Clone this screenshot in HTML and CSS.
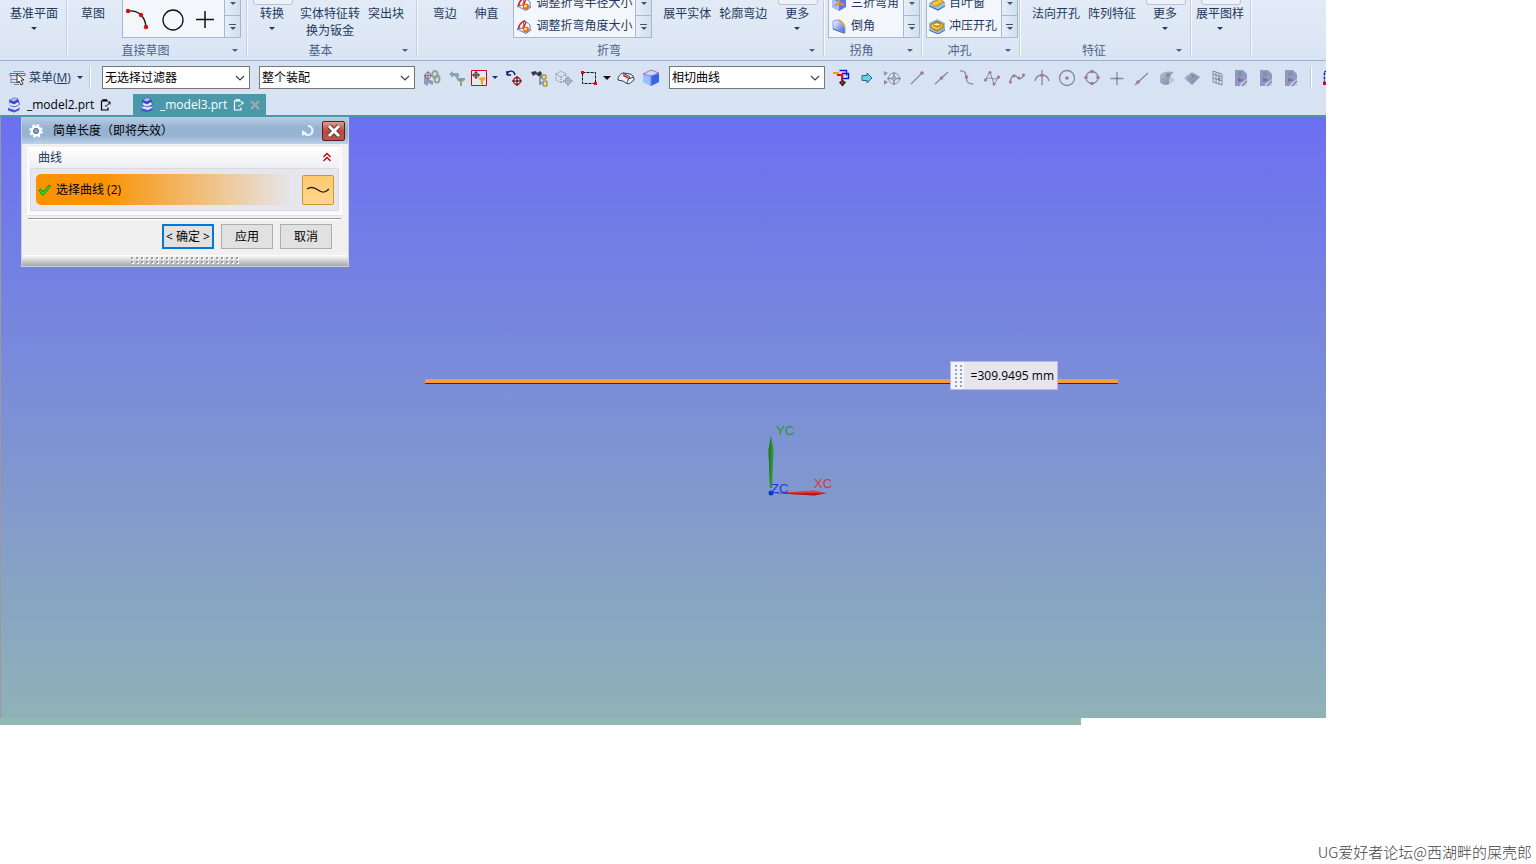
FILE: index.html
```html
<!DOCTYPE html>
<html lang="zh-CN">
<head>
<meta charset="utf-8">
<title>_model3.prt</title>
<link rel="stylesheet" href="styles.css">
</head>
<body>
<svg class="defs" aria-hidden="true">
  <linearGradient id="blue" x1="0" y1="0" x2="1" y2="1"><stop offset="0" stop-color="#fff"/><stop offset="1" stop-color="#2f5fe0"/></linearGradient>
  <linearGradient id="gold" x1="0" y1="0" x2="1" y2="1"><stop offset="0" stop-color="#ffe76a"/><stop offset="1" stop-color="#e09a10"/></linearGradient>
  <linearGradient id="slate" x1="0" y1="0" x2="1" y2="1"><stop offset="0" stop-color="#b4c4d8"/><stop offset="1" stop-color="#6f83a0"/></linearGradient>
  <symbol id="part" viewBox="0 0 14 16"><path d="M1 11l5-2.500 7 2-1 3-5 2-6-2z" fill="#4a58d8"/><path d="M1 11l5-2.500 7 2-5 2.500z" fill="#e2e6fc"/><path d="M2 3l5-2.500 4 1 2 6-6 3-4-2z" fill="#3a44cc"/><path d="M3 3l4-2 4 1-4 2.500z" fill="#b4bcf8"/><path d="M3 8l4 1.500 5-2-1-2.500-4 2.500-4-2z" fill="#e8ecff"/></symbol>
  <symbol id="clip" viewBox="0 0 12 12"><path d="M8 2H1.500v9H8V8.500M3 2V.8h3.500V2" fill="none" stroke="currentColor" stroke-width="1.200"/><path d="M5 7c2 0 3-1 4.500-3.500M8 3h2v2.500" fill="none" stroke="currentColor"/></symbol>
  <symbol id="sheet" viewBox="0 0 16 18"><path d="M2 1h8l4 4v12H2z" fill="#9298c4"/><circle cx="7" cy="5" r="2.300" fill="#6f9d94"/><path d="M5 8.500l6 2.500-6 2z" fill="#8a6a92"/><path d="M14 10l-7 5v2h7z" fill="#c5cee2"/><path d="M14 12l-5 5" stroke="#7d84b4" stroke-width="1.500"/></symbol>
  <symbol id="bend" viewBox="0 0 16 16"><path d="M1 11l5-1 9 2-5 3.500z" fill="#e6eefc" stroke="#5a78b8"/><path d="M7 9l1-7 6 5v5" fill="#fff" stroke="#6b7fae"/><path d="M2.500 11C3 6 5 4 9 3M10 4l-3 7" fill="none" stroke="#d32020" stroke-width="1.500"/><circle cx="10" cy="11.500" r="3" fill="#f0641e"/><circle cx="9.500" cy="11" r="1.500" fill="#ffe36a"/></symbol>
</svg>
<div class="app">
  <nav class="ribbon" aria-label="功能区">
    <section class="group g-datum"><div class="tools"><button class="tool">基准平面<i class="caret"></i></button></div></section>
    <section class="group g-sketch">
      <div class="tools"><button class="tool w48">草图</button>
        <div class="gallery shapes">
          <div class="items"><button aria-label="圆弧"><svg width="26" height="24" viewBox="0 0 26 24"><path d="M3 4C12 3 20 8 21 20" fill="none" stroke="#111" stroke-width="1.300"/><g fill="#d8100c"><circle cx="3" cy="4" r="2.200"/><circle cx="16" cy="8" r="2.200"/><circle cx="21" cy="20" r="2.200"/></g></svg></button><button aria-label="圆"><svg width="24" height="24" viewBox="0 0 24 24"><circle cx="12" cy="13" r="10" fill="none" stroke="#111" stroke-width="1.300"/></svg></button><button aria-label="点"><svg width="20" height="20" viewBox="0 0 20 20"><path d="M10 2v17M1 10.500h18" stroke="#111" stroke-width="1.500"/></svg></button></div>
          <div class="scroll"><button aria-label="下"><i class="caret"></i></button><button class="more" aria-label="展开"><i class="caret"></i></button></div>
        </div></div>
      <div class="caption"><span>直接草图</span><button class="launch" aria-label="直接草图选项"><i class="caret"></i></button></div>
    </section>
    <section class="group g-basic">
      <div class="tools"><button class="tool framed w48">转换<i class="caret"></i></button><button class="tool">实体特征转<br>换为钣金</button><button class="tool">突出块</button></div>
      <div class="caption"><span>基本</span><button class="launch" aria-label="基本选项"><i class="caret"></i></button></div>
    </section>
    <section class="group g-bend">
      <div class="tools"><button class="tool w42">弯边</button><button class="tool w42">伸直</button>
        <div class="gallery list bends">
          <div class="items"><button><svg width="16" height="16"><use href="#bend"/></svg>调整折弯半径大小</button><button><svg width="16" height="16"><use href="#bend"/></svg>调整折弯角度大小</button></div>
          <div class="scroll"><button aria-label="下"><i class="caret"></i></button><button class="more" aria-label="展开"><i class="caret"></i></button></div>
        </div>
        <button class="tool">展平实体</button><button class="tool">轮廓弯边</button><button class="tool framed w52">更多<i class="caret"></i></button></div>
      <div class="caption"><span>折弯</span><button class="launch" aria-label="折弯选项"><i class="caret"></i></button></div>
    </section>
    <section class="group g-corner">
      <div class="tools"><div class="gallery list">
          <div class="items"><button><svg width="16" height="16" viewBox="0 0 16 16"><path d="M1 4l7-3 7 3v8l-7 4-7-4z" fill="#5a78e8"/><path d="M1 4l7 3v9l-7-4z" fill="#a8bcfa"/><path d="M8 7V2M8 8l-4 3M8 8l5 2" stroke="#f08a20" stroke-width="2"/></svg>三折弯角</button><button><svg width="16" height="16" viewBox="0 0 16 16"><path d="M2 3l5-1c4 1 6 4 7 8v5l-3-1-9-3z" fill="url(#blue)" stroke="#7fa0ea"/><path d="M7 2c4 1 6 4 7 8" fill="none" stroke="#e8a030" stroke-width="1.500"/><path d="M2 11l9 3.500 3 .5" stroke="#5a6a90" fill="none"/></svg>倒角</button></div>
          <div class="scroll"><button aria-label="下"><i class="caret"></i></button><button class="more" aria-label="展开"><i class="caret"></i></button></div>
        </div></div>
      <div class="caption"><span>拐角</span><button class="launch" aria-label="拐角选项"><i class="caret"></i></button></div>
    </section>
    <section class="group g-punch">
      <div class="tools"><div class="gallery list">
          <div class="items"><button><svg width="16" height="16" viewBox="0 0 16 16"><path d="M0 8l8-5 8 4v4l-7 5-9-5z" fill="#8fc0f4"/><path d="M2 8l9-4 4 3-9 5z" fill="url(#gold)" stroke="#c88a10"/><path d="M0 11l9 4 7-4" stroke="#2b5fb8" fill="none"/></svg>百叶窗</button><button><svg width="16" height="16" viewBox="0 0 16 16"><path d="M0 5l8-4 8 4v7l-7 4-9-5z" fill="#8fc0f4"/><path d="M2 6l6-3 6 3v4l-6 3-6-3z" fill="url(#gold)" stroke="#a87008"/><ellipse cx="8" cy="6.500" rx="3.500" ry="1.800" fill="#fff3a8" stroke="#8f5c05"/><path d="M0 12l9 4 7-4" stroke="#2b5fb8" fill="none"/></svg>冲压开孔</button></div>
          <div class="scroll"><button aria-label="下"><i class="caret"></i></button><button class="more" aria-label="展开"><i class="caret"></i></button></div>
        </div></div>
      <div class="caption"><span>冲孔</span><button class="launch" aria-label="冲孔选项"><i class="caret"></i></button></div>
    </section>
    <section class="group g-feature">
      <div class="tools"><button class="tool">法向开孔</button><button class="tool">阵列特征</button><button class="tool framed w52">更多<i class="caret"></i></button></div>
      <div class="caption"><span>特征</span><button class="launch" aria-label="特征选项"><i class="caret"></i></button></div>
    </section>
    <section class="group g-flat"><div class="tools"><button class="tool framed">展平图样<i class="caret"></i></button></div></section>
  </nav>

  <div class="bar" role="toolbar">
    <button class="menu"><svg width="17" height="16" viewBox="0 0 17 16"><path d="M2 6v7M2 9.500h7M2 12.500h8M5 14.500h5" stroke="#7d8696" fill="none"/><path d="M4 1.500h11" stroke="#8a93a2"/><path d="M1 3.500h15v2H1z" fill="#e8f0ff" stroke="#3d6be0"/><path d="M8 4v9l2-2 2 4 2-1-2-4h3z" fill="#fff" stroke="#333"/></svg>菜单(<u>M</u>)<i class="caret"></i></button>
    <span class="sep"></span>
    <label class="combo filter"><select aria-label="选择过滤器"><option>无选择过滤器</option></select><svg width="10" height="6" viewBox="0 0 10 6"><path d="M1 1l4 4 4-4"/></svg></label>
    <label class="combo scope"><select aria-label="选择范围"><option>整个装配</option></select><svg width="10" height="6" viewBox="0 0 10 6"><path d="M1 1l4 4 4-4"/></svg></label>
    <button class="ic" aria-label="装配约束"><svg viewBox="0 0 18 18"><path d="M1 7v8l4 2v-3l5 2v-4l-5-2-2-3z" fill="#8c9db8"/><path d="M5 2v9M1 6.500h8" stroke="#85707f"/><circle cx="5" cy="6.500" r="3" fill="none" stroke="#85707f"/><ellipse cx="12" cy="5.500" rx="2.800" ry="3.500" fill="none" stroke="#98a094" stroke-width="2"/><ellipse cx="14" cy="10" rx="2.500" ry="3.500" fill="none" stroke="#98a094" stroke-width="2"/></svg></button>
    <button class="ic" aria-label="重置过滤器"><svg viewBox="0 0 18 18"><path d="M1 5l4-3v2h4c3 0 3 4-1 6 0-3-1-3-3-3v2z" fill="#86a6b8"/><path d="M9 9h8v2l-3 2v4h-2v-4l-3-2z" fill="#949b92"/></svg></button>
    <button class="ic w20" aria-label="点过滤器"><svg viewBox="0 0 18 18"><path d="M1.500 1.500h15v15h-15z" fill="#e6eaf4" stroke="#d0021b"/><circle cx="6" cy="6" r="2.500" fill="none" stroke="#a03030"/><path d="M6 2v8M2 6h8" stroke="#222"/><path d="M8 9l7-1v2l-2 2v4l-2-1v-3z" fill="#f4a41c"/></svg></button>
    <button class="ic w12" aria-label="点过滤器选项"><i class="caret"></i></button>
    <button class="ic" aria-label="定向"><svg viewBox="0 0 18 18"><path d="M2 6V2M2 6h4M2 5c2-4 7-4 8 1" fill="none" stroke="#10106a" stroke-width="1.400"/><circle cx="12" cy="12" r="3.500" fill="none" stroke="#e81010" stroke-width="1.400"/><path d="M12 7v10M7 12h10" stroke="#111"/></svg></button>
    <button class="ic" aria-label="查找"><svg viewBox="0 0 18 18"><path d="M1 3l5-1 1 2 3-2 2 2-1 3H8L6 5 3 7z" fill="#333c44"/><path d="M10 6v10M10 8h4M10 14h4" stroke="#557" fill="none"/><path d="M12 6h4v4h-4zM13 12h4v5h-4z" fill="#ffe040" stroke="#777"/></svg></button>
    <button class="ic" aria-label="显示隐藏"><svg viewBox="0 0 18 18"><path d="M1 5l5-3 5 3v6l-5 3-5-3zM1 5l5 3 5-3M6 8v6" fill="none" stroke="#778" stroke-dasharray="1 1"/><circle cx="13" cy="12" r="3" fill="none" stroke="#8c95a8"/><path d="M13 7v10M8 12h10" stroke="#8c95a8"/></svg></button>
    <button class="ic" aria-label="矩形选择"><svg viewBox="0 0 18 18"><path d="M2.500 3.500h13v11h-13z" fill="none" stroke="#111" stroke-dasharray="3 1"/><path d="M1 2h3v3H1zM14 13h3v3h-3z" fill="#e01010"/></svg></button>
    <button class="ic w12" aria-label="选择方式"><i class="caret dark"></i></button>
    <button class="ic" aria-label="实体"><svg viewBox="0 0 18 18"><path d="M1 10c1-4 3-6 6-6l6 1c3 1 4 3 4 6l-5 4-3-1-3-2-5-1z" fill="#eef1f5" stroke="#39404c"/><path d="M6 4l7 4c-2 1-2 4-3 6M11 10l6-2" fill="none" stroke="#39404c"/><path d="M6 6l5 3" stroke="#e02020" stroke-width="1.500"/></svg></button>
    <button class="ic" aria-label="视图"><svg viewBox="0 0 18 18"><path d="M1 5l8-4 8 3v9l-8 4-8-4z" fill="#9cc8fa"/><path d="M9 7l8-3v9l-8 4z" fill="#2f68e8"/><path d="M1 5l8 2v10l-8-4z" fill="#8cc8fc"/><path d="M1 5l8-4 8 3-8 3z" fill="#c4dcfb" stroke="#b06cc0"/><path d="M9 7v10" stroke="#b06cc0"/></svg></button>
    <label class="combo curve"><select aria-label="曲线规则"><option>相切曲线</option></select><svg width="10" height="6" viewBox="0 0 10 6"><path d="M1 1l4 4 4-4"/></svg></label>
    <button class="ic" aria-label="在相交处停止"><svg viewBox="0 0 18 18"><path d="M6.500 1.500h7v5M9.500 4.500h6v5h-6z" fill="none" stroke="#1010e8" stroke-width="1.400"/><path d="M0 4h6" stroke="#f49a10" stroke-width="2"/><path d="M4 6h5v5" fill="none" stroke="#e01010" stroke-width="2"/><path d="M6 13.500l3.500-3 3.500 3-3.500 4z" fill="#222"/><circle cx="9.500" cy="13.500" r="1.500" fill="#e01010"/></svg></button>
    <button class="ic" aria-label="跟随圆角"><svg viewBox="0 0 18 18"><path d="M4 6.500h5V4l5 5-5 5v-2.500H4z" fill="#66d4e0" stroke="#2a6490"/></svg></button>
    <button class="ic" aria-label="启用捕捉点"><svg viewBox="0 0 18 18"><path d="M1 2l4 2-4 3z" fill="#7da596"/><path d="M1 11l4 2-4 3z" fill="#a87d90"/><g fill="none" stroke="#8794a8"><circle cx="11" cy="9.500" r="5.500"/><path d="M11 3v13M4 9.500h14" stroke-width="1.600"/><circle cx="11" cy="9.500" r="2" fill="#b8bca8"/></g></svg></button>
    <button class="ic" aria-label="端点"><svg viewBox="0 0 18 18"><path class="ln" d="M3 15L14 4"/><circle class="pt" cx="14" cy="4" r="1.800"/></svg></button>
    <button class="ic" aria-label="中点"><svg viewBox="0 0 18 18"><path class="ln" d="M2 15L15 3"/><circle class="pt" cx="8.500" cy="9" r="1.800"/></svg></button>
    <button class="ic" aria-label="控制点"><svg viewBox="0 0 18 18"><path class="ln" d="M2 2c11-1 1 13 13 13"/><circle class="pt" cx="8.500" cy="8" r="1.800"/></svg></button>
    <button class="ic" aria-label="极点"><svg viewBox="0 0 18 18"><path class="ln thin" d="M2 11l5-8 4 12 5-7M2 11c6-5 8 2 14-3"/><g class="pt"><circle cx="2.500" cy="11" r="1.600"/><circle cx="7" cy="3.500" r="1.600"/><circle cx="11" cy="15" r="1.600"/><circle cx="15.500" cy="8" r="1.600"/></g></svg></button>
    <button class="ic" aria-label="定义点"><svg viewBox="0 0 18 18"><path class="ln" d="M2 13C4 5 7 5 9 8s5 2 7-2"/><g class="pt"><circle cx="2.500" cy="13" r="1.600"/><circle cx="6" cy="7" r="1.600"/><circle cx="11" cy="9" r="1.600"/><circle cx="15.500" cy="6" r="1.600"/></g></svg></button>
    <button class="ic" aria-label="交点"><svg viewBox="0 0 18 18"><path class="ln" d="M9 1v15M2 12C4 4 14 4 16 12"/><circle class="pt" cx="9" cy="6.500" r="1.800"/></svg></button>
    <button class="ic" aria-label="圆心"><svg viewBox="0 0 18 18"><circle class="ln" cx="9" cy="9" r="7.500"/><circle class="pt" cx="9" cy="9" r="1.800"/></svg></button>
    <button class="ic" aria-label="象限点"><svg viewBox="0 0 18 18"><circle class="ln" cx="9" cy="8.500" r="6"/><g class="pt"><circle cx="9" cy="2.500" r="1.800"/><circle cx="9" cy="14.500" r="1.800"/><circle cx="3" cy="8.500" r="1.800"/><circle cx="15" cy="8.500" r="1.800"/></g></svg></button>
    <button class="ic" aria-label="现有点"><svg viewBox="0 0 18 18"><path class="ln" d="M9 3v13M2.500 9.500h13"/><circle class="pt" cx="9" cy="9.500" r="1.500"/></svg></button>
    <button class="ic" aria-label="曲线上的点"><svg viewBox="0 0 18 18"><path class="ln" d="M2 16L15 4"/><circle class="pt" cx="5" cy="13" r="1.800"/></svg></button>
    <button class="ic" aria-label="面上的点"><svg viewBox="0 0 18 18"><path d="M12 7l5 4-6 5z" fill="#c2c8d2"/><path d="M2 6c3-4 8-4 14-3-4 3-5 7-5 12-4 2-8 0-9-2z" fill="url(#slate)"/><circle class="pt" cx="10" cy="6" r="1.800"/></svg></button>
    <button class="ic" aria-label="小平面"><svg viewBox="0 0 18 18"><path d="M1 9l8-6 8 5-8 8z" fill="url(#slate)"/><path d="M4 7l8 6M7 5l8 5M4 12l8-7" stroke="#8d93ac"/><circle class="pt" cx="10" cy="7" r="1.800"/></svg></button>
    <button class="ic" aria-label="栅格点"><svg viewBox="0 0 18 18"><path class="ln thin" d="M5 2l9 3v11l-9-3zM8 3v11M11 4v11M5 5l9 3M5 9l9 3"/><circle class="pt" cx="11" cy="10" r="1.500"/></svg></button>
    <button class="ic" aria-label="工作表一"><svg viewBox="0 0 18 18"><use href="#sheet" width="16" height="18"/></svg></button>
    <button class="ic" aria-label="工作表二"><svg viewBox="0 0 18 18"><use href="#sheet" width="16" height="18"/></svg></button>
    <button class="ic" aria-label="工作表三"><svg viewBox="0 0 18 18"><use href="#sheet" width="16" height="18"/></svg></button>
    <span class="sep late"></span>
    <button class="ic cut" aria-label="更多"><svg viewBox="0 0 18 18"><path d="M1.500 2.500h14v12h-14z" fill="#fff" stroke="#1010e8" stroke-width="1.500" stroke-dasharray="3 1"/><path d="M0 13h4v3H0z" fill="#d01010"/></svg></button>
  </div>

  <div class="tabs" role="tablist">
    <button class="tab" role="tab"><svg width="14" height="16"><use href="#part"/></svg><span>_model2.prt</span><svg width="12" height="12"><use href="#clip"/></svg></button>
    <button class="tab active" role="tab" aria-selected="true"><svg width="14" height="16"><use href="#part"/></svg><span>_model3.prt</span><svg width="12" height="12"><use href="#clip"/></svg><svg class="x" width="10" height="10" viewBox="0 0 10 10"><path d="M1 1l8 8M9 1L1 9"/></svg></button>
  </div>

  <main class="view">
    <div class="edge"></div>
    <div class="measure"><svg class="grip" width="13" height="27" viewBox="0 0 13 27"><path d="M5 3v23M10 3v23"/></svg><output>=309.9495 mm</output></div>
    <svg class="triad" width="80" height="80" viewBox="0 0 80 80">
      <path d="M11 12l2.500 14L12 64h-2L8.500 26z" fill="#2f9430"/><path d="M11 12L8.500 26 10 64l1-30z" fill="#237a28"/>
      <path d="M14 69l40-2.500 13 2.500-13 2.500z" fill="#e83a3a"/><path d="M14 69h53l-13 2.500z" fill="#a81c24"/>
      <circle cx="11" cy="69" r="2.500" fill="#0c3ab0"/>
      <text x="16" y="11" fill="#2f9430">YC</text><text x="54" y="64" fill="#e03434">XC</text><text x="11" y="69" fill="#1538f0">ZC</text>
    </svg>
    <form class="dialog" onsubmit="return false">
      <header><svg width="16" height="16" viewBox="0 0 16 16"><circle cx="8" cy="8" r="5.800" fill="none" stroke="#fff" stroke-width="2" stroke-dasharray="2.600 1.955"/><circle cx="8" cy="8" r="4" fill="none" stroke="#fff" stroke-width="2.500"/><circle cx="8" cy="8" r="2.500" fill="#8ea6c4" stroke="#4d6484"/></svg><h1>简单长度（即将失效）</h1>
        <button class="reset" aria-label="重置"><svg width="14" height="14" viewBox="0 0 14 14"><path d="M7 2c6 0 6 9 0 9-2 0-3-1-4-2" fill="none" stroke="#eef4fb" stroke-width="2.200"/><path d="M1 6v6l5-3z" fill="#eef4fb"/></svg></button>
        <button class="close" aria-label="关闭"><svg width="14" height="14" viewBox="0 0 14 14"><path d="M2 2l10 10M12 2L2 12" stroke="#5a3a3a" stroke-width="5"/><path d="M2 2l10 10M12 2L2 12" stroke="#fff" stroke-width="3"/></svg></button></header>
      <section class="panel">
        <div class="phead"><h2>曲线</h2><button aria-label="折叠"><svg width="8" height="10" viewBox="0 0 8 10"><path d="M.5 5L4 1.500 7.500 5M.5 9L4 5.500 7.500 9" fill="none" stroke="#c00010" stroke-width="1.400"/></svg></button></div>
        <div class="pbody"><div class="pick"><svg width="13" height="13" viewBox="0 0 13 13"><path d="M1 7l2-1 2 3 6-7 1.500 1L5.500 12H4z" fill="#2be02b" stroke="#0a9a1c"/></svg>选择曲线 (2)</div>
          <button class="curvebtn" aria-label="曲线"><svg width="26" height="12" viewBox="0 0 26 12"><path d="M2 5c4-3 7-2 11 1s7 3 11-1" fill="none" stroke="#222" stroke-width="1.500"/></svg></button></div>
      </section>
      <div class="actions"><button class="primary">&lt; 确定 &gt;</button><button>应用</button><button>取消</button></div>
      <footer><svg width="109" height="7" viewBox="0 0 109 7"><g stroke-width="2" stroke-dasharray="2 3"><path d="M1 2h108M1 6h108" stroke="#fff"/><path d="M0 1h109M0 5h109" stroke="#9c9c9c"/></g></svg></footer>
    </form>
  </main>
</div>
<div class="under"><div class="strip"></div><p>UG爱好者论坛@西湖畔的屎壳郎</p></div>
</body>
</html>
```

FILE: styles.css
```css
* { box-sizing: border-box; }
html, body { margin: 0; }
body {
  min-height: 100vh;
  display: flex;
  flex-direction: column;
  background: #fff;
  font: 12px/17px "Open Sans", "Noto Sans CJK SC", sans-serif;
  color: #000;
}
button { font: inherit; color: inherit; background: none; border: 0; padding: 0; margin: 0; }
h1, h2, p { margin: 0; font: inherit; }
svg { flex: none; display: block; }
.defs { position: absolute; width: 0; height: 0; }
.app { flex: 1; display: flex; flex-direction: column; margin-right: 210px; min-width: 0; overflow: hidden; }

.caret { display: block; width: 0; height: 0; border: 3px solid transparent; border-top-color: #1e395b; border-bottom: 0; }
.caret.dark { border-width: 4px; border-bottom: 0; border-top-color: #111; }

/* ribbon */
.ribbon { display: flex; height: 61px; background: linear-gradient(#e2eaf6, #dae5f4); border-bottom: 1px solid #9fb0cc; color: #1e395b; overflow: hidden; }
.group { flex: none; display: flex; flex-direction: column; height: 56px; border-right: 1px solid #c4cedd; box-shadow: 1px 0 #f8fafd; }
.tools { flex: none; display: flex; height: 41px; align-items: flex-start; }
.tool { display: flex; flex-direction: column; align-items: center; padding: 5px 4px 0; white-space: nowrap; position: relative; text-align: center; }
.tool .caret { margin-top: 5px; }
.framed::before { content: ""; position: absolute; top: -4px; left: 50%; margin-left: -19px; width: 38px; height: 7px; border: 1px solid #b9c3d2; border-radius: 3px; background: #edf1f8; }
.w42 { width: 42px; }
.w48 { width: 48px; }
.w52 { width: 52px; }
.g-datum { width: 67px; padding-left: 6px; }
.g-sketch { width: 180px; }
.g-sketch .tools { padding-left: 2px; }
.g-basic { width: 170px; }
.g-basic .tools { padding-left: 1px; }
.g-bend { width: 407px; }
.g-bend .tools { padding-left: 7px; }
.g-corner, .g-punch { width: 98px; }
.g-corner .tools, .g-punch .tools { padding-left: 4px; }
.g-feature { width: 171px; }
.g-feature .tools { padding-left: 8px; }
.g-flat { width: 60px; padding-left: 1px; }
.caption { flex: none; display: flex; align-items: center; height: 18px; color: #4b6388; }
.caption span { flex: 1; text-align: center; }
.launch { width: 22px; display: flex; justify-content: center; }
.caption .caret { border-top-color: #4b6388; }

.gallery { display: flex; height: 38px; border: 1px solid #a6b7d3; border-top: 0; background: #f3f6fb; overflow: hidden; }
.items { flex: 1; display: flex; }
.shapes { width: 119px; margin-left: 5px; }
.shapes .items { align-items: center; padding-left: 2px; gap: 10px; }
.list { width: 92px; }
.list.bends { width: 140px; margin: 0 7px 0 6px; }
.list .items { flex-direction: column; justify-content: flex-end; }
.list .items button { flex: none; display: flex; align-items: center; gap: 4px; height: 23px; padding-left: 2px; white-space: nowrap; }
.scroll { flex: none; width: 16px; display: flex; flex-direction: column; border-left: 1px solid #a6b7d3; background: linear-gradient(90deg, #e6eef8, #d3dfee); }
.scroll button { flex: none; height: 22px; display: flex; align-items: center; justify-content: center; flex-direction: column; }
.scroll button:first-child { height: 15px; padding-bottom: 8px; }
.scroll .more { border-top: 1px solid #a6b7d3; }
.scroll .more::before { content: ""; width: 7px; height: 1px; background: #43566f; margin-bottom: 2px; }
.scroll .caret { border-top-color: #43566f; }

/* selection bar */
.bar { display: flex; align-items: center; height: 33px; padding-left: 8px; background: #d7e3f3; overflow: hidden; }
.menu { display: flex; align-items: center; width: 77px; padding-left: 1px; color: #1e395b; white-space: nowrap; flex: none; }
.menu svg { margin-right: 3px; }
.menu .caret { margin-left: 6px; }
.sep { flex: none; width: 2px; height: 23px; margin-left: 4px; border-left: 1px solid #c3ccd9; border-right: 1px solid #fff; }
.sep.late { margin-left: 6px; }
.combo { flex: none; display: flex; align-items: center; height: 23px; background: #fff; border: 1px solid #767676; padding-right: 4px; }
.combo select { flex: 1; min-width: 0; height: 21px; appearance: none; border: 0; background: none; padding: 0 2px; font: inherit; color: #000; outline: 0; }
.combo svg path { fill: none; stroke: #444; stroke-width: 1.2; }
.filter { width: 148px; margin-left: 11px; }
.scope { width: 156px; margin: 0 4px 0 9px; }
.curve { width: 156px; margin: 0 4px 0 6px; }
.ic { flex: none; width: 25px; height: 24px; display: flex; align-items: center; justify-content: center; }
.ic svg { width: 18px; height: 18px; }
.w20 { width: 20px; }
.w12 { width: 12px; }
.cut { margin-left: 7px; }
.ln { fill: none; stroke: #7f8da4; stroke-width: 1.3; }
.thin { stroke-width: 1; }
.pt { fill: #a6788a; }

/* part tabs */
.tabs { display: flex; height: 23px; background: #d7e3f3; border-bottom: 2px solid #4b99a8; }
.tab { display: flex; align-items: center; width: 133px; padding-left: 7px; white-space: nowrap; }
.tab span { margin: 0 6px; }
.active { background: #4b99a8; color: #fff; }
.x { margin-left: 5px; stroke: #a9a9a9; stroke-width: 2; }

/* graphics window */
.view { flex: 1; position: relative; background: linear-gradient(#6b70f1, #7b8dd8 45%, #8fb2b7); border-left: 1px solid #9a9a9a; }
.edge { position: absolute; left: 32%; right: 208px; top: 262px; height: 5px; background: #f79d3c; border-bottom: 1px solid #2c2a3c; border-radius: 1px; }
.measure { position: absolute; right: 268px; top: 244px; display: flex; height: 29px; border: 1px solid #c0b4e0; background: #e6e5ec; line-height: 27px; }
.measure output { padding: 0 3px 0 7px; }
.grip { background: #f1f4fa; stroke: #9aa4b4; stroke-width: 2; stroke-dasharray: 2 2; }
.triad { position: absolute; left: 759px; top: 307px; font: 13px "Liberation Sans", sans-serif; }

.dialog { position: absolute; left: 20px; top: 0; width: 328px; background: #f0f0f0; border: 1px solid #c4d2e6; border-width: 0 1px 1px; }
.dialog header { display: flex; align-items: center; height: 27px; padding: 0 3px 0 6px; background: linear-gradient(#b8cde4, #97b3d2 40%, #97b3d2 70%, #bdd2ea); }
.dialog h1 { flex: 1; margin-left: 9px; }
.reset { margin-right: 7px; }
.close { width: 23px; height: 20px; display: flex; align-items: center; justify-content: center; border: 1px solid #5c1c20; border-radius: 2px; background: linear-gradient(#dc9c94, #c0473c 50%, #b8554c); }
.panel { margin: 3px 6px 3px 5px; padding: 0 2px 3px; background: #f8f8fb; border: 1px solid #fff; box-shadow: 0 1px #e0e0e4; }
.phead { display: flex; align-items: center; justify-content: space-between; height: 20px; padding: 0 8px 2px; color: #1e395b; background: linear-gradient(#fff, #eeeff4); }
.pbody { display: flex; align-items: center; gap: 2px; height: 43px; padding: 0 4px 0 5px; background: #e6e6ec; border: 1px solid #dadae2; }
.pick { flex: 1; display: flex; align-items: center; gap: 5px; height: 31px; padding-left: 2px; border-radius: 5px; background: linear-gradient(90deg, #fb9200 25%, #e6e6ec 97%); }
.curvebtn { width: 32px; height: 30px; display: flex; align-items: center; justify-content: center; background: linear-gradient(#fdca6e, #ffd690); border: 1px solid #c79a30; border-radius: 2px; }
.actions { display: flex; justify-content: flex-end; gap: 7px; margin: 0 7px 0 6px; padding: 5px 9px 6px 0; border-top: 1px solid #9a9a9a; box-shadow: inset 0 1px #fff; }
.actions button { width: 52px; height: 25px; background: #e1e1e1; border: 1px solid #adadad; white-space: nowrap; }
.actions .primary { border: 2px solid #0078d7; }
.dialog footer { display: flex; justify-content: center; align-items: center; height: 11px; background: linear-gradient(#fff, #a6a6a6); }

/* page bottom */
.under { flex: none; height: 146px; display: flex; flex-direction: column; justify-content: space-between; align-items: flex-end; }
.strip { align-self: flex-start; width: calc(100% - 455px); height: 7px; background: #93bab2; }
.under p { padding-right: 4px; font: 300 15px/25px "Noto Sans CJK SC", sans-serif; color: #444; }
```
